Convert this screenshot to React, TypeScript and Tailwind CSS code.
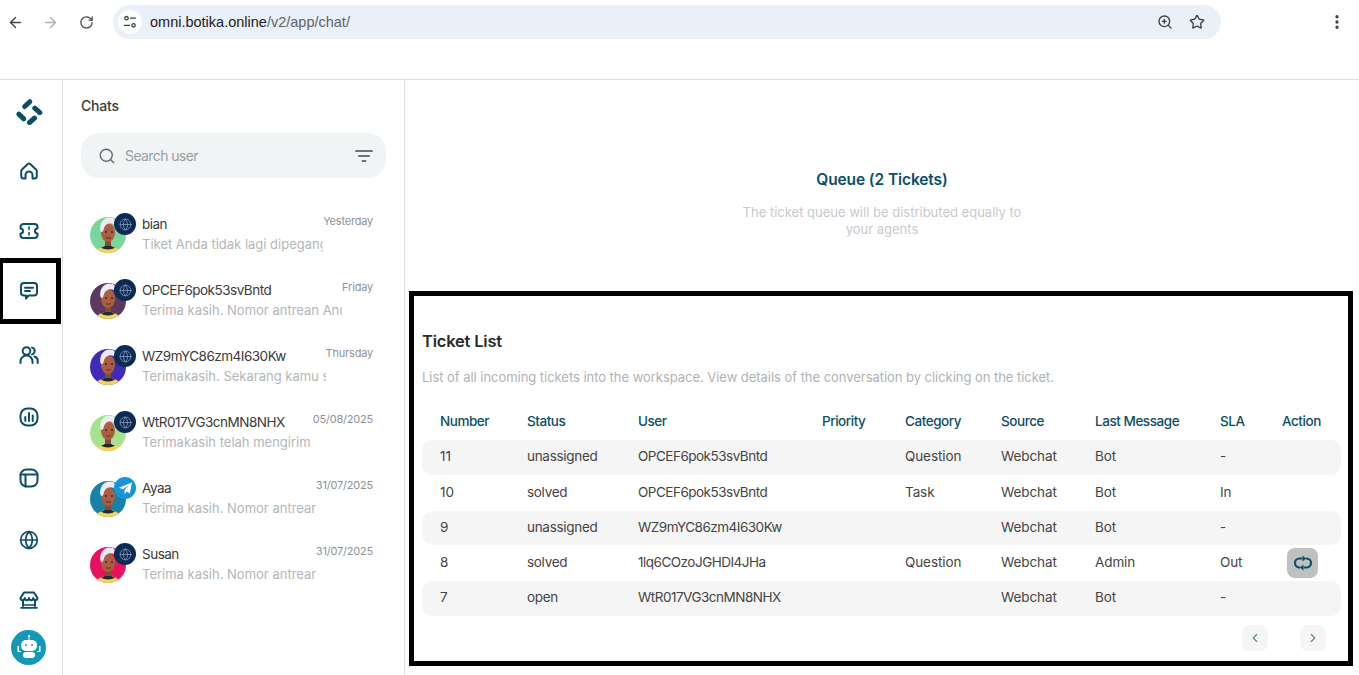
import React from "react";
import { ArrowLeft, ArrowRight, RotateCw, ZoomIn, Star, EllipsisVertical, Search, Globe, ChevronLeft, ChevronRight } from "lucide-react";

const teal = "#0b4f66";

function Logo() {
  return (
    <svg width="28" height="28" viewBox="0 0 28 28" fill="none" stroke={teal} strokeWidth="5" strokeLinecap="round">
      <path d="M9.7 9.5 14.8 4.700" />
      <path d="M19.800 11.200 24.800 15.700" />
      <path d="M3.800 17.200 8.800 21.800" />
      <path d="M14.500 25.500 19.500 21.200" />
    </svg>
  );
}

function NavSvg({ children }: { children: React.ReactNode }) {
  return (
    <svg width="20" height="20" viewBox="0 0 20 20" fill="none" stroke={teal} strokeWidth="2" strokeLinecap="round" strokeLinejoin="round">
      {children}
    </svg>
  );
}

function HomeIcon() {
  return (
    <NavSvg>
      <path d="M3 8.500 8.500 3.200a2.200 2.200 0 0 1 3 0L17 8.500a2.500 2.500 0 0 1 .8 1.800V15a2.500 2.500 0 0 1-2.500 2.500h-1.800V14a3.500 3.500 0 0 0-7 0v3.500H4.700A2.500 2.500 0 0 1 2.200 15v-4.700A2.500 2.500 0 0 1 3 8.500z" />
    </NavSvg>
  );
}

function TicketIcon() {
  return (
    <NavSvg>
      <path d="M4.500 3h11a3 3 0 0 1 3 3v1.500a2.500 2.500 0 0 0 0 5V14a3 3 0 0 1-3 3h-11a3 3 0 0 1-3-3v-1.500a2.500 2.500 0 0 0 0-5V6a3 3 0 0 1 3-3z" />
      <path d="M10 6v2.500M10 11.500V14" strokeWidth="1.600" />
    </NavSvg>
  );
}

function ChatIcon() {
  return (
    <NavSvg>
      <path d="M5 2h10a3 3 0 0 1 3 3v6.500a3 3 0 0 1-3 3H9.500L7 17.500v-3H5a3 3 0 0 1-3-3V5a3 3 0 0 1 3-3z" />
      <path d="M6 6.800h8M6 10h5" />
    </NavSvg>
  );
}

function UsersIcon() {
  return (
    <NavSvg>
      <circle cx="7.500" cy="6" r="3.800" />
      <path d="M1.500 18v-1.500a6 6 0 0 1 12 0V18" />
      <path d="M13 2.600a3.500 3.500 0 0 1 0 6.800" />
      <path d="M15.500 11.500a4.500 4.500 0 0 1 3.200 4.500v2" />
    </NavSvg>
  );
}

function ChartIcon() {
  return (
    <NavSvg>
      <rect x="1.500" y="1.500" width="17" height="17" rx="7" />
      <path d="M6.300 10v4M10 6v8M13.700 8.500V14" />
    </NavSvg>
  );
}

function PanelIcon() {
  return (
    <NavSvg>
      <rect x="1.500" y="1.500" width="17" height="17" rx="6" />
      <path d="M1.500 6.500h17M6.500 6.500v12" />
    </NavSvg>
  );
}

function StoreIcon() {
  return (
    <NavSvg>
      <path d="M5 2.500h10l3.500 5.500a2.100 2.100 0 0 1-4.250 0 2.100 2.100 0 0 1-4.250 0 2.100 2.100 0 0 1-4.250 0 2.100 2.100 0 0 1-4.250 0z" />
      <path d="M4 11v5M16 11v5" />
      <path d="M2 17.800h16M4 15h12" strokeWidth="1.700" />
    </NavSvg>
  );
}

function BotIcon() {
  return (
    <svg width="28" height="28" viewBox="0 0 28 28" fill="#fff">
      <rect x="13.500" y="1" width="1" height="5" />
      <circle cx="14" cy="2" r="1" />
      <rect x="6" y="6" width="16" height="11" rx="5" />
      <rect x="8" y="18" width="12" height="6" rx="3" />
      <path d="M2.500 12h1.500v5h2v1H2.500zM24 12h1.500v6H22v-1h2z" />
      <circle cx="11" cy="11" r="1" fill="#1398b8" />
      <circle cx="17" cy="11" r="1" fill="#1398b8" />
    </svg>
  );
}

function LoopIcon() {
  return (
    <svg width="20" height="20" viewBox="0 0 20 20" fill="none" stroke={teal} strokeWidth="2.200" strokeLinecap="round">
      <path d="M8.500 5.500H6.500a4.500 4.500 0 0 0 0 9" />
      <path d="M11.500 14.500h2a4.500 4.500 0 0 0 0-9" />
      <path d="M9.500 2.500v6l3.500-3zM10.500 11.500v6L7 14.500z" fill={teal} stroke="none" />
    </svg>
  );
}

function FilterIcon() {
  return (
    <svg width="18" height="14" viewBox="0 0 18 14" fill="none" stroke="#6b7280" strokeWidth="2" strokeLinecap="round">
      <path d="M1 2h16M4 7h10M7.500 12h3" />
    </svg>
  );
}

function TuneIcon() {
  return (
    <svg width="14" height="14" viewBox="0 0 14 14" fill="none" stroke="#3c4043" strokeWidth="1.300">
      <circle cx="3.500" cy="3.200" r="1.700" />
      <path d="M7 3.200h6M1 10.300h6" />
      <circle cx="10.500" cy="10.300" r="1.700" />
    </svg>
  );
}

function Avatar({ bg }: { bg: string }) {
  const id = "c" + bg.slice(1);
  return (
    <svg width="36" height="36" viewBox="0 0 36 36" className="block">
      <defs>
        <clipPath id={id}>
          <circle cx="18" cy="18" r="18" />
        </clipPath>
      </defs>
      <g clipPath={`url(#${id})`}>
        <rect width="36" height="36" fill={bg} />
        <path d="M6 36c1-5 6-7 12-7s11 2 12 7z" fill="#f4d35e" />
        <path d="M11 30.500c2.500-.5 4-1.500 5-3h4c1 1.500 2.500 2.500 5 3-3 2.500-11 2.500-14 0z" fill="#1f2937" />
        <rect x="15" y="20" width="6" height="9" fill="#8a4a32" />
        <ellipse cx="18" cy="15.500" rx="7" ry="9.500" fill="#ab5f40" />
        <path d="M10.500 14C9 7 13 1 19 .5c5-.3 8 3 6.800 8-2.800-2.800-6.300-3-9.300-1-2.500 1.600-2.500 4.500-3.500 7-1 .6-2.200.4-2.500-.5z" fill="#ecebf3" />
        <circle cx="16" cy="15" r=".9" fill="#1f2937" />
        <circle cx="22" cy="15" r=".9" fill="#1f2937" />
        <path d="M16 20.500c1.500 1 3.500 1 5 0" stroke="#4a2415" strokeWidth=".8" fill="none" />
      </g>
    </svg>
  );
}

function TelegramGlyph() {
  return (
    <svg width="15" height="15" viewBox="0 0 16 16" fill="#fff">
      <path d="M15 1.500 1 7.300l4.300 1.500L12 4.200 7 9.600v4.200l2.500-2.700 3 2.200z" />
    </svg>
  );
}

const chats = [
  { name: "bian", time: "Yesterday", msg: "Tiket Anda tidak lagi dipegang oleh agen manapun saat ini", bg: "#77d69c", tg: false },
  { name: "OPCEF6pok53svBntd", time: "Friday", msg: "Terima kasih. Nomor antrean Anda adalah nomor sebelas", bg: "#5c3860", tg: false },
  { name: "WZ9mYC86zm4I630Kw", time: "Thursday", msg: "Terimakasih. Sekarang kamu sudah bisa melanjutkan", bg: "#3f2bb5", tg: false },
  { name: "WtR017VG3cnMN8NHX", time: "05/08/2025", msg: "Terimakasih telah mengirim pesan kepada kami hari ini", bg: "#a7e28f", tg: false },
  { name: "Ayaa", time: "31/07/2025", msg: "Terima kasih. Nomor antrean Anda adalah nomor", bg: "#1583a8", tg: true },
  { name: "Susan", time: "31/07/2025", msg: "Terima kasih. Nomor antrean Anda adalah nomor", bg: "#e8105f", tg: false },
];

const rows = [
  { n: "11", s: "unassigned", u: "OPCEF6pok53svBntd", c: "Question", src: "Webchat", l: "Bot", sla: "-", h: "h-[35px]", shade: true, act: false },
  { n: "10", s: "solved", u: "OPCEF6pok53svBntd", c: "Task", src: "Webchat", l: "Bot", sla: "In", h: "h-[36px]", shade: false, act: false },
  { n: "9", s: "unassigned", u: "WZ9mYC86zm4I630Kw", c: "", src: "Webchat", l: "Bot", sla: "-", h: "h-[34px]", shade: true, act: false },
  { n: "8", s: "solved", u: "1lq6COzoJGHDI4JHa", c: "Question", src: "Webchat", l: "Admin", sla: "Out", h: "h-[36px]", shade: false, act: true },
  { n: "7", s: "open", u: "WtR017VG3cnMN8NHX", c: "", src: "Webchat", l: "Bot", sla: "-", h: "h-[35px]", shade: true, act: false },
];

const gridCols = "grid grid-cols-[87px_111px_184px_83px_96px_94px_125px_62px_1fr] items-center pl-[18px]";
const navCell = "flex w-[57px] items-center justify-center";

export default function App() {
  return (
    <div className="h-[675px] w-[1359px] overflow-hidden bg-white font-['Inter','Noto_Sans',sans-serif] text-[#3a3a3a]">
      {/* Browser toolbar */}
      <div className="flex h-[80px] items-start border-b border-[#dedede] pt-[5px]">
        <div className="flex h-[34px] w-[113px] items-center text-[#44474a]">
          <ArrowLeft size={17} className="ml-[7px]" strokeWidth={2} />
          <ArrowRight size={17} className="ml-[18px] text-[#b0b2b5]" strokeWidth={2} />
          <RotateCw size={15} className="ml-[20px]" strokeWidth={2} />
        </div>
        <div className="flex h-[34px] w-[1108px] items-center rounded-full bg-[#e9f0f9] pl-[5px] pr-[16px]">
          <div className="flex h-[24px] w-[24px] items-center justify-center rounded-full bg-white">
            <TuneIcon />
          </div>
          <div className="ml-[8px] flex-1 pt-[1px] font-['Liberation_Sans',sans-serif] text-[14.5px] text-[#202124]">
            omni.botika.online<span className="text-[#5f6368]">/v2/app/chat/</span>
          </div>
          <ZoomIn size={16} className="mr-[16px] text-[#3c4043]" strokeWidth={2} />
          <Star size={16} className="text-[#3c4043]" strokeWidth={2} />
        </div>
        <div className="flex h-[34px] flex-1 items-center justify-end pr-[13px]">
          <EllipsisVertical size={18} className="text-[#3c4043]" strokeWidth={2.4} />
        </div>
      </div>

      <div className="flex h-[595px]">
        {/* Sidebar */}
        <div className="flex w-[63px] shrink-0 flex-col items-start border-r border-[#dedede]">
          <div className={`${navCell} h-[61px]`}><Logo /></div>
          <div className={`${navCell} h-[60px]`}><HomeIcon /></div>
          <div className={`${navCell} h-[57px] pt-[2px]`}><TicketIcon /></div>
          <div className="flex h-[66px] w-[61px] items-center justify-center border-[5px] border-l-[3px] border-black pr-[2px]"><ChatIcon /></div>
          <div className={`${navCell} h-[62px]`}><UsersIcon /></div>
          <div className={`${navCell} h-[61px]`}><ChartIcon /></div>
          <div className={`${navCell} h-[62px]`}><PanelIcon /></div>
          <div className={`${navCell} h-[61px]`}>
            <Globe size={20} color={teal} strokeWidth={2} />
          </div>
          <div className={`${navCell} h-[60px]`}><StoreIcon /></div>
          <div className="ml-[11px] flex h-[35px] w-[35px] items-center justify-center rounded-full bg-[#1398b8]">
            <BotIcon />
          </div>
        </div>

        {/* Chat list */}
        <div className="flex w-[342px] shrink-0 flex-col border-r border-[#dedede] pl-[18px] pr-[18px]">
          <div className="pt-[17px] text-[14px] font-medium leading-[18px] tracking-[-0.2px] text-[#3a3a3a]">Chats</div>
          <div className="mt-[18px] flex h-[45px] items-center rounded-[18px] bg-[#f0f4f4] pl-[17px] pr-[13px]">
            <Search size={18} className="text-[#5f6b6f]" strokeWidth={1.8} />
            <div className="ml-[9px] flex-1 text-[14px] tracking-[-0.6px] text-[#9a9ea0]">Search user</div>
            <FilterIcon />
          </div>
          <div className="mt-[39px] flex flex-col gap-[30px] pl-[9px] pr-[13px]">
            {chats.map((c) => (
              <div key={c.name} className="flex h-[36px] items-start">
                <div className="relative mr-[17px] h-[36px] w-[35px] shrink-0">
                  <Avatar bg={c.bg} />
                  <div className={`absolute -right-[11px] -top-[4px] flex h-[22px] w-[22px] items-center justify-center rounded-full ${c.tg ? "bg-[#1a94d8]" : "bg-[#0b2a55]"}`}>
                    {c.tg ? <TelegramGlyph /> : <Globe size={13} color="#8fa3bd" strokeWidth={1.4} />}
                  </div>
                </div>
                <div className="flex min-w-0 flex-1 flex-col overflow-hidden">
                  <div className="-mt-[3px] whitespace-nowrap text-[13.5px] leading-[20px] tracking-[-0.5px] text-[#3a3a3a]">{c.name}</div>
                  <div className="whitespace-nowrap text-[13px] leading-[20px] text-[#b4b6b8]">{c.msg}</div>
                </div>
                <div className="-mt-[4px] shrink-0 text-[11px] leading-[16px] tracking-[-0.2px] text-[#8f9295]">{c.time}</div>
              </div>
            ))}
          </div>
        </div>

        {/* Main */}
        <div className="flex min-w-0 flex-1 flex-col">
          <div className="flex h-[211px] flex-col items-center pt-[90px]">
            <div className="text-[15.5px] font-semibold leading-[20px] tracking-[-0.1px] text-[#0b4f66]">Queue (2 Tickets)</div>
            <div className="mt-[14px] w-[300px] text-center text-[13px] leading-[17px] text-[#c8cacc]">
              The ticket queue will be distributed equally to your agents
            </div>
          </div>
          <div className="ml-[4px] h-[375px] w-[944px] border-[5px] border-black pl-[8px] pr-[7px] pt-[33px]">
            <div className="text-[16.5px] font-semibold leading-[24px] tracking-[-0.2px] text-[#2b2b2b]">Ticket List</div>
            <div className="mt-[15px] text-[13px] leading-[18px] tracking-[-0.04px] text-[#b0b2b4]">
              List of all incoming tickets into the workspace. View details of the conversation by clicking on the ticket.
            </div>
            <div className={`${gridCols} mb-[4px] mt-[20px] h-[30px] text-[13.5px] font-medium tracking-[-0.45px] text-[#0b4f66]`}>
              <div>Number</div>
              <div>Status</div>
              <div>User</div>
              <div>Priority</div>
              <div>Category</div>
              <div>Source</div>
              <div>Last Message</div>
              <div>SLA</div>
              <div>Action</div>
            </div>
            {rows.map((r) => (
              <div key={r.n} className={`${gridCols} ${r.h} rounded-[10px] pb-[2px] text-[13.5px] tracking-[-0.1px] text-[#444] ${r.shade ? "bg-[#f5f5f5]" : ""}`}>
                <div>{r.n}</div>
                <div className="tracking-[-0.3px]">{r.s}</div>
                <div className="tracking-[-0.5px]">{r.u}</div>
                <div></div>
                <div>{r.c}</div>
                <div>{r.src}</div>
                <div>{r.l}</div>
                <div>{r.sla}</div>
                <div>
                  {r.act && (
                    <div className="ml-[5px] mt-[2px] flex h-[30px] w-[31px] items-center justify-center rounded-[8px] bg-[#bfc1c1]">
                      <LoopIcon />
                    </div>
                  )}
                </div>
              </div>
            ))}
            <div className="mt-[9px] flex justify-end gap-[32px] pr-[15px]">
              <div className="flex h-[26px] w-[26px] items-center justify-center rounded-[8px] bg-[#f5f5f5]"><ChevronLeft size={14} color="#5b8295" /></div>
              <div className="flex h-[26px] w-[26px] items-center justify-center rounded-[8px] bg-[#f5f5f5]"><ChevronRight size={14} color="#5b8295" /></div>
            </div>
          </div>
        </div>
      </div>
    </div>
  );
}
